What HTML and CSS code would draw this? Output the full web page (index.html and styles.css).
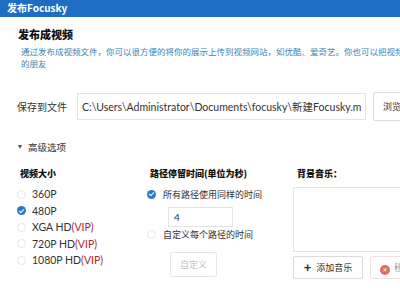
FILE: index.html
```html
<!DOCTYPE html>
<html lang="zh-CN">
<head>
    <meta charset="UTF-8">
    <title>发布Focusky</title>
    <link rel="stylesheet" href="styles.css">
</head>
<body>
<div class="titlebar">发布Focusky</div>

<div class="intro">
    <h1>发布成视频</h1>
    <p class="desc">通过发布成视频文件，你可以很方便的将你的展示上传到视频网站，如优酷、爱奇艺。你也可以把视频文件发送给你的朋友</p>
</div>

<div class="save-row">
    <label class="save-label">保存到文件</label>
    <input class="path-input" type="text" value="C:\Users\Administrator\Documents\focusky\新建Focusky.mp4">
    <button class="btn browse">浏览</button>
</div>

<div class="advanced">
    <span class="caret"></span>高级选项
</div>

<div class="options">
    <div class="col col-size">
        <h2>视频大小</h2>
        <label class="radio"><span class="dot"></span>360P</label>
        <label class="radio"><span class="dot checked"></span>480P</label>
        <label class="radio"><span class="dot"></span>XGA HD<span class="vip">(VIP)</span></label>
        <label class="radio"><span class="dot"></span>720P HD<span class="vip">(VIP)</span></label>
        <label class="radio"><span class="dot"></span>1080P HD<span class="vip">(VIP)</span></label>
    </div>

    <div class="col col-time">
        <h2>路径停留时间(单位为秒)</h2>
        <label class="radio cn"><span class="dot checked"></span>所有路径使用同样的时间</label>
        <input class="num-input" type="text" value="4">
        <label class="radio cn second"><span class="dot"></span>自定义每个路径的时间</label>
        <button class="btn custom" disabled>自定义</button>
    </div>

    <div class="col col-music">
        <h2>背景音乐：</h2>
        <div class="music-box"></div>
        <div class="music-buttons">
            <button class="btn add"><span class="plus">+</span>添加音乐</button>
            <button class="btn remove"><span class="x-icon">✕</span>移除音乐</button>
        </div>
    </div>
</div>
</body>
</html>
```

FILE: styles.css
```css
body {
    margin: 0;
    width: 400px;
    height: 300px;
    overflow: hidden;
    background: #fff;
    font-family: "Lato", "Noto Sans CJK SC", sans-serif;
    color: #333;
}

.titlebar {
    height: 17px;
    line-height: 16px;
    padding-left: 7px;
    background: #1d6ec2;
    color: #fff;
    font-family: "Noto Sans CJK SC", sans-serif;
    font-size: 10px;
    font-weight: bold;
}

.intro {
    height: 75px;
    padding: 9px 0 0 18px;
    box-sizing: border-box;
}

h1 {
    margin: 0;
    font-family: "Noto Sans CJK SC", serif;
    font-size: 11px;
    font-weight: 900;
    line-height: 16px;
    color: #111;
}

.desc {
    margin: 3px 0 0 3px;
    width: 440px;
    font-family: "Noto Sans CJK SC", sans-serif;
    font-size: 8.5px;
    line-height: 12px;
    color: #3a86b4;
}

.save-row {
    display: flex;
    align-items: center;
    padding-left: 17px;
}

.save-label {
    width: 60px;
    flex-shrink: 0;
    font-family: "Noto Sans CJK SC", sans-serif;
    font-size: 10px;
    color: #333;
}

.path-input {
    width: 289px;
    height: 27px;
    flex-shrink: 0;
    box-sizing: border-box;
    border: 1px solid #e4e4e4;
    padding: 0 4px;
    font-family: "Lato", "Noto Sans CJK SC", sans-serif;
    font-size: 10.5px;
    color: #333;
}

.btn {
    background: #fff;
    border: 1px solid #dcdcdc;
    border-radius: 2px;
    font-family: "Noto Sans CJK SC", sans-serif;
    font-size: 9px;
    color: #333;
    cursor: pointer;
}

.browse {
    margin-left: 7px;
    width: 50px;
    height: 29px;
    flex-shrink: 0;
    padding: 0 0 0 9px;
    text-align: left;
}

.advanced {
    margin-top: 19px;
    padding-left: 18px;
    height: 14px;
    display: flex;
    align-items: center;
    font-family: "Noto Sans CJK SC", sans-serif;
    font-size: 9.5px;
    color: #333;
}

.caret {
    width: 0;
    height: 0;
    border-left: 2.5px solid transparent;
    border-right: 2.5px solid transparent;
    border-top: 4px solid #555;
    margin-right: 6px;
}

.options {
    display: flex;
    margin-top: 13px;
}

.col h2 {
    margin: 0 0 5px 3px;
    height: 14px;
    font-family: "Noto Sans CJK SC", sans-serif;
    font-size: 9px;
    font-weight: 900;
    line-height: 14px;
    color: #111;
}

.col-size {
    width: 147px;
    flex-shrink: 0;
    padding-left: 17px;
    box-sizing: border-box;
}

.col-time {
    width: 146px;
    flex-shrink: 0;
    display: flex;
    flex-direction: column;
    align-items: flex-start;
}

.col-music {
    flex: 1;
}

.col-music h2 {
    margin: 0 0 6px 4px;
}

.radio {
    display: flex;
    align-items: center;
    height: 16.5px;
    font-size: 10.5px;
    color: #333;
}

.radio.cn {
    height: 16px;
    font-family: "Noto Sans CJK SC", sans-serif;
    font-size: 9px;
}

.radio.second {
    height: 15px;
}

.vip {
    color: #b0242c;
}

.dot {
    width: 9px;
    height: 9px;
    border-radius: 50%;
    border: 1px solid #e6e6e6;
    box-sizing: border-box;
    margin-right: 6px;
    flex-shrink: 0;
}

.radio.cn .dot {
    margin-right: 7px;
}

.dot.checked {
    border: none;
    background: #2a78c8;
    position: relative;
}

.dot.checked::after {
    content: "";
    position: absolute;
    left: 3px;
    top: 1.5px;
    width: 2px;
    height: 4px;
    border: solid #fff;
    border-width: 0 1.5px 1.5px 0;
    transform: rotate(45deg);
}

.num-input {
    margin: 5px 0 0 21px;
    width: 65px;
    height: 20px;
    box-sizing: border-box;
    border: 1px solid #e4e4e4;
    padding: 0 5px;
    font-family: "Lato", sans-serif;
    font-size: 10px;
    color: #333;
}

.custom {
    margin: 10px 0 0 23px;
    width: 47px;
    height: 25px;
    color: #c4c4c4;
    border-color: #e8e8e8;
}

.music-box {
    width: 120px;
    height: 65px;
    border: 1px solid #e6e6e6;
    box-sizing: border-box;
}

.music-buttons {
    display: flex;
    margin-top: 4px;
}

.add {
    width: 70px;
    height: 23px;
    flex-shrink: 0;
    padding: 0;
}

.plus {
    font-family: "Liberation Sans", sans-serif;
    font-size: 13px;
    font-weight: bold;
    margin-right: 5px;
    vertical-align: -1px;
}

.remove {
    margin-left: 7px;
    width: 70px;
    height: 23px;
    flex-shrink: 0;
    padding: 0 0 0 9px;
    text-align: left;
    color: #999;
    border-color: #f0e2e2;
    white-space: nowrap;
}

.x-icon {
    display: inline-block;
    width: 10px;
    height: 10px;
    border-radius: 50%;
    background: #e06a6a;
    color: #fff;
    font-family: "DejaVu Sans", sans-serif;
    font-size: 6px;
    line-height: 10px;
    text-align: center;
    margin-right: 4px;
    vertical-align: -1px;
}
```
